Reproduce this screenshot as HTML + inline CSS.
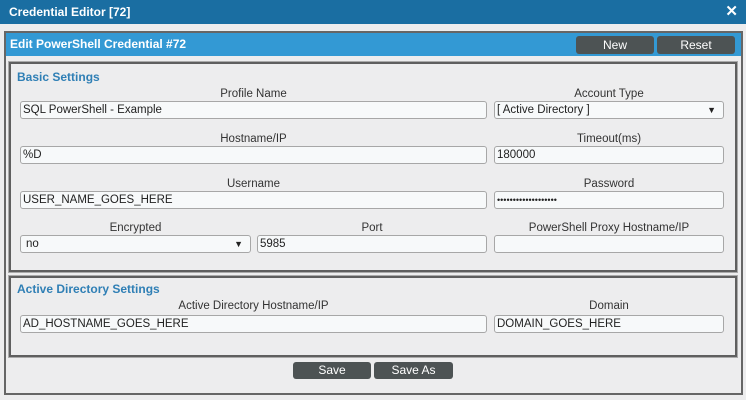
<!DOCTYPE html>
<html><head><style>
*{box-sizing:border-box;margin:0;padding:0}
body{width:746px;height:400px;background:#ededee;font-family:"Liberation Sans",Arial,sans-serif;font-size:12px;color:#333;position:relative;overflow:hidden}
.a{position:absolute}
.tb{left:0;top:0;width:746px;height:24px;background:#1a6ea2;color:#fff;font-weight:bold;font-size:12px;line-height:25px;padding-left:9px}
.x{right:8px;top:0;color:#fff;font-size:15px;font-weight:bold;line-height:24px}
.outer{left:4px;top:31px;width:739px;height:364px;border:2px solid #666}
.hdr{left:6px;top:33px;width:735px;height:23px;background:#3399d4;color:#fff;font-weight:bold;line-height:23px;padding-left:4px}
.btn{background:#4d5354;color:#fff;border-radius:3px;text-align:center;font-size:12px}
.fs{border:2px solid #5f5f5f;outline:1px solid #aaa}
.leg{color:#2f7fb5;font-weight:bold;font-size:12px}
.lbl{text-align:center;font-size:11.5px;color:#333}
.in{background:#f7f9fa;border:1px solid #a7a7a7;border-radius:3px;height:18px;line-height:16px;padding-left:2px;font-size:11.5px;color:#222}
.arr{position:absolute;right:7px;top:0;font-size:9px}
</style></head><body>
<div class="a tb">Credential Editor [72]</div>
<div class="a x">✕</div>
<div class="a outer"></div>
<div class="a hdr">Edit PowerShell Credential #72</div>
<div class="a btn" style="left:576px;top:36px;width:78px;height:18px;line-height:18px">New</div>
<div class="a btn" style="left:657px;top:36px;width:78px;height:18px;line-height:18px">Reset</div>

<div class="a fs" style="left:9px;top:62px;width:728px;height:210px"></div>
<div class="a leg" style="left:17px;top:70px">Basic Settings</div>
<div class="a lbl" style="left:20px;top:88px;width:467px">Profile Name</div>
<div class="a in" style="left:20px;top:101px;width:467px">SQL PowerShell - Example</div>
<div class="a lbl" style="left:494px;top:88px;width:230px">Account Type</div>
<div class="a in" style="left:494px;top:101px;width:230px">[ Active Directory ]<span class="arr">▼</span></div>

<div class="a lbl" style="left:20px;top:133px;width:467px">Hostname/IP</div>
<div class="a in" style="left:20px;top:146px;width:467px">%D</div>
<div class="a lbl" style="left:494px;top:133px;width:230px">Timeout(ms)</div>
<div class="a in" style="left:494px;top:146px;width:230px">180000</div>

<div class="a lbl" style="left:20px;top:178px;width:467px">Username</div>
<div class="a in" style="left:20px;top:191px;width:467px">USER_NAME_GOES_HERE</div>
<div class="a lbl" style="left:494px;top:178px;width:230px">Password</div>
<div class="a in" style="left:494px;top:191px;width:230px;font-size:9px;letter-spacing:0">•••••••••••••••••••</div>

<div class="a lbl" style="left:20px;top:222px;width:231px">Encrypted</div>
<div class="a in" style="left:20px;top:235px;width:231px;padding-left:5px">no<span class="arr">▼</span></div>
<div class="a lbl" style="left:257px;top:222px;width:230px">Port</div>
<div class="a in" style="left:257px;top:235px;width:230px">5985</div>
<div class="a lbl" style="left:494px;top:222px;width:230px">PowerShell Proxy Hostname/IP</div>
<div class="a in" style="left:494px;top:235px;width:230px"></div>

<div class="a fs" style="left:9px;top:276px;width:728px;height:81px"></div>
<div class="a leg" style="left:17px;top:282px">Active Directory Settings</div>
<div class="a lbl" style="left:20px;top:300px;width:467px">Active Directory Hostname/IP</div>
<div class="a in" style="left:20px;top:315px;width:467px">AD_HOSTNAME_GOES_HERE</div>
<div class="a lbl" style="left:494px;top:300px;width:230px">Domain</div>
<div class="a in" style="left:494px;top:315px;width:230px">DOMAIN_GOES_HERE</div>

<div class="a btn" style="left:293px;top:362px;width:78px;height:17px;line-height:17px">Save</div>
<div class="a btn" style="left:374px;top:362px;width:79px;height:17px;line-height:17px">Save As</div>
</body></html>
